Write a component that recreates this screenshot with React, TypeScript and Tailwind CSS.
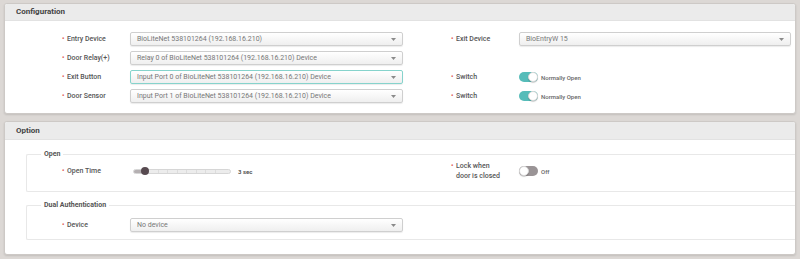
import type { ReactNode } from "react";

const font = { fontFamily: "Roboto, 'Liberation Sans', sans-serif" };

function Label({ children, two }: { children: ReactNode; two?: boolean }) {
  return (
    <div className="w-[68px] shrink-0 flex items-start text-[7px] font-medium text-[#555] leading-[10px]">
      <span className="w-[5px] text-[#e0605a]">•</span>
      <span className={two ? "w-[44px]" : ""}>{children}</span>
    </div>
  );
}

function Select({ value, width, focus }: { value: string; width: string; focus?: boolean }) {
  return (
    <div
      className={`${width} h-[14px] shrink-0 flex items-center justify-between pl-[6px] pr-[6px] rounded-[2px] border bg-gradient-to-b from-white to-[#efefef] shadow-[0_1px_1px_rgba(0,0,0,0.08)] ${
        focus ? "border-[#86d3cc]" : "border-[#cfcfcf]"
      }`}
    >
      <span className="text-[7px] text-[#777] truncate">{value}</span>
      <svg width="5" height="3" viewBox="0 0 5 3">
        <path d="M0 0h5L2.5 3z" fill="#8a8a8a" />
      </svg>
    </div>
  );
}

function Toggle({ on, text }: { on: boolean; text: string }) {
  return (
    <div className="flex items-center gap-[3px]">
      <div
        className={`w-[19px] h-[10px] rounded-full flex items-center ${
          on ? "bg-[#56bcb9] justify-end" : "bg-[#9a9496] justify-start"
        }`}
      >
        <div className="w-[10px] h-[10px] rounded-full bg-white border border-[#d8d8d8] shadow-[0_1px_1px_rgba(0,0,0,0.2)]" />
      </div>
      <span className="text-[6px] font-medium text-[#666]">{text}</span>
    </div>
  );
}

function Panel({ title, children, className, head }: { title: string; children: ReactNode; className?: string; head: string }) {
  return (
    <section className={`mx-[4px] bg-white border border-[#cdc9c6] rounded-[3px] shadow-[0_1px_2px_rgba(0,0,0,0.12)] overflow-hidden ${className ?? ""}`}>
      <div className={`${head} bg-[#ebebeb] border-b border-[#e2e2e2] flex items-center pl-[11px] text-[8px] font-bold text-[#444]`}>
        {title}
      </div>
      {children}
    </section>
  );
}

function Fieldset({ legend, children, className }: { legend: string; children: ReactNode; className?: string }) {
  return (
    <fieldset className={`ml-[21px] mr-0 border border-r-0 border-[#e8e8e8] rounded-l-[2px] ${className ?? ""}`}>
      <legend className="ml-[14px] px-[3px] text-[7px] font-bold text-[#555] leading-[9px]">{legend}</legend>
      {children}
    </fieldset>
  );
}

export default function App() {
  const rows = [
    { l: "Entry Device", v: "BioLiteNet 538101264 (192.168.16.210)", right: "exit" },
    { l: "Door Relay(+)", v: "Relay 0 of BioLiteNet 538101264 (192.168.16.210) Device" },
    { l: "Exit Button", v: "Input Port 0 of BioLiteNet 538101264 (192.168.16.210) Device", focus: true, right: "switch" },
    { l: "Door Sensor", v: "Input Port 1 of BioLiteNet 538101264 (192.168.16.210) Device", right: "switch" },
  ];

  return (
    <div style={font} className="w-[800px] h-[259px] bg-[#dcd8d5] pt-[3px] overflow-hidden">
      <Panel title="Configuration" head="h-[17px]" className="h-[111px]">
        <div className="pt-[11px] flex flex-col gap-[5px]">
          {rows.map((r) => (
            <div key={r.l} className="h-[14px] flex items-center pl-[57px]">
              <Label>{r.l}</Label>
              <Select value={r.v} width="w-[273px]" focus={r.focus} />
              <div className="w-[48px] shrink-0" />
              {r.right === "exit" && (
                <>
                  <Label>Exit Device</Label>
                  <Select value="BioEntryW 15" width="w-[272px]" />
                </>
              )}
              {r.right === "switch" && (
                <>
                  <Label>Switch</Label>
                  <Toggle on text="Normally Open" />
                </>
              )}
            </div>
          ))}
        </div>
      </Panel>

      <Panel title="Option" head="h-[18px]" className="mt-[7px] h-[134px]">
        <div className="pt-[10px]">
          <Fieldset legend="Open" className="h-[42px]">
            <div className="flex items-center h-[14px] mt-[5px] pl-[35px]">
              <Label>Open Time</Label>
              <div className="flex items-center w-[273px] shrink-0">
                <div className="relative ml-[3px] w-[98px] h-[5px] rounded-full bg-[#ececec] border border-[#d6d6d6]">
                  <div className="absolute inset-0 flex justify-between px-[14px]">
                    {Array.from({ length: 8 }).map((_, i) => (
                      <div key={i} className="w-px h-full bg-[#dcdcdc]" />
                    ))}
                  </div>
                  <div className="absolute left-0 top-0 h-full w-[12px] rounded-full bg-[#b5b0b2]" />
                  <div className="absolute left-[7px] top-1/2 -translate-y-1/2 w-[8px] h-[8px] rounded-full bg-[#574a50]" />
                </div>
                <span className="ml-[7px] text-[6px] font-bold text-[#555]">3 sec</span>
              </div>
              <div className="w-[48px] shrink-0" />
              <Label two>Lock when door is closed</Label>
              <Toggle on={false} text="Off" />
            </div>
          </Fieldset>
          <Fieldset legend="Dual Authentication" className="mt-[9px] h-[39px]">
            <div className="flex items-center h-[14px] mt-[8px] pl-[35px]">
              <Label>Device</Label>
              <Select value="No device" width="w-[273px]" />
            </div>
          </Fieldset>
        </div>
      </Panel>
    </div>
  );
}
